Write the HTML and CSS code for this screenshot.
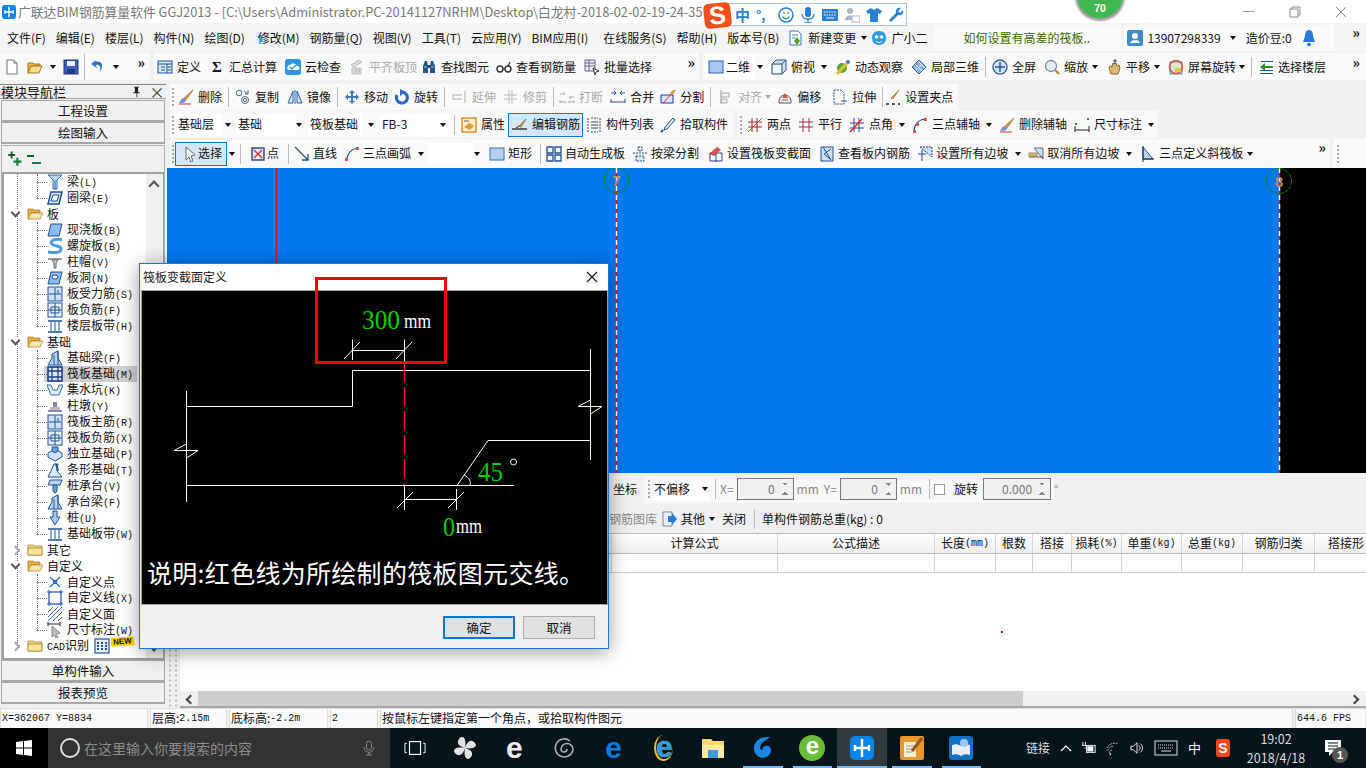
FILE: index.html
```html
<!DOCTYPE html>
<html lang="zh-CN">
<head>
<meta charset="utf-8">
<title>广联达BIM钢筋算量软件 GGJ2013</title>
<link rel="stylesheet" href="styles.css">
</head>
<body>
<svg class="defs" aria-hidden="true">
<symbol id="doc" viewBox="0 0 16 16"><path d="M3 1h7l3 3v11H3z" fill="#fff" stroke="#777"/><path d="M10 1v3h3" fill="#ddd" stroke="#777"/></symbol>
<symbol id="open" viewBox="0 0 16 16"><path d="M1 4h5l1 1h6v2H5L2 14H1z" fill="#e8b84a" stroke="#a07820"/><path d="M4 7h11l-3 7H1z" fill="#f6dc8c" stroke="#a07820"/></symbol>
<symbol id="save" viewBox="0 0 16 16"><rect x="1" y="1" width="14" height="14" fill="#3d5fb8" stroke="#223a80"/><rect x="4" y="2" width="8" height="5" fill="#eef"/><rect x="4" y="10" width="8" height="5" fill="#223a80"/></symbol>
<symbol id="undo" viewBox="0 0 16 16"><path d="M5 3c6-2 9 3 6 8l-2 3c3-5 1-9-3-8l1 3-6-4 5-4z" fill="#2a6fc9"/></symbol>
<symbol id="tbl" viewBox="0 0 16 16"><rect x="1" y="2" width="14" height="12" fill="#dbe7f7" stroke="#1f4f9a"/><path d="M1 5h14M4 8h4M4 11h4M10 5v9M11 8h3M11 11h3" stroke="#1f4f9a" fill="none"/></symbol>
<symbol id="cloud" viewBox="0 0 16 16"><rect x="0" y="0" width="16" height="16" rx="3" fill="#2f95e0"/><path d="M3 11a3 3 0 0 1 2-5 4 4 0 0 1 7 1 2 2 0 0 1 1 4z" fill="#fff"/><path d="M5 8l2 2 4-4" stroke="#2f95e0" stroke-width="1.5" fill="none"/></symbol>
<symbol id="flush" viewBox="0 0 16 16"><path d="M2 6l8-5 3 2-8 5z" fill="#ddd" stroke="#bbb"/><path d="M3 9h9v6H3z" fill="#ddd" stroke="#bbb"/><path d="M7 10v4M10 10v4" stroke="#aaa"/></symbol>
<symbol id="binoc" viewBox="0 0 16 16"><path d="M2 14V7l2-5h2l1 5v7zM9 14V7l1-5h2l2 5v7z" fill="#27508f"/><rect x="6" y="6" width="4" height="3" fill="#27508f"/><path d="M3 8h3M10 8h3" stroke="#9cc" /></symbol>
<symbol id="glass" viewBox="0 0 16 16"><circle cx="4" cy="10" r="3" fill="none" stroke="#333" stroke-width="1.4"/><circle cx="12" cy="10" r="3" fill="none" stroke="#333" stroke-width="1.4"/><path d="M7 10h2M12 7l2-4" stroke="#333" stroke-width="1.2"/></symbol>
<symbol id="batch" viewBox="0 0 16 16"><path d="M1 1h10v11H1zM1 4h10M1 7h10M5 1v11" fill="#eef" stroke="#667"/><path d="M9 9l6 3-3 1-1 3z" fill="#fff" stroke="#333"/></symbol>
<symbol id="sq" viewBox="0 0 16 16"><rect x="1" y="2" width="14" height="12" fill="#a9c6f0" stroke="#2b5fb0"/></symbol>
<symbol id="cube" viewBox="0 0 16 16"><path d="M1 5l4-4h10v10l-4 4H1z" fill="#cfe0f2" stroke="#33557f"/><path d="M1 5h10v10M11 5l4-4" fill="none" stroke="#33557f"/><path d="M2 6h8v8H2z" fill="#eef5fc"/></symbol>
<symbol id="orbit" viewBox="0 0 16 16"><circle cx="7" cy="9" r="5" fill="#5aa83c"/><path d="M2 15L14 2" stroke="#d8c030" stroke-width="3"/><circle cx="13" cy="3" r="2" fill="#4a7bd0"/></symbol>
<symbol id="local3" viewBox="0 0 16 16"><path d="M8 1l7 7-7 7-7-7z" fill="#8bb2e6" stroke="#2d5da8"/><path d="M4 5l7 7M7 2l7 7M5 11l6-6" stroke="#fff"/></symbol>
<symbol id="full" viewBox="0 0 16 16"><circle cx="8" cy="8" r="7" fill="#d4e3f6" stroke="#3b5f99" stroke-width="1.4"/><path d="M8 3v10M3 8h10" stroke="#27508f" stroke-width="1.5"/></symbol>
<symbol id="zoom" viewBox="0 0 16 16"><circle cx="7" cy="7" r="5.5" fill="#e4edf6" stroke="#7a8aa0" stroke-width="1.3"/><path d="M11 11l4 4" stroke="#b08a3a" stroke-width="2.4"/></symbol>
<symbol id="pan" viewBox="0 0 16 16"><path d="M3 9l2 6h7l2-6-1-3-2 1-1-3-2 1-1-1-1 4-2-1z" fill="#dcb878" stroke="#8a6a30"/><path d="M9 0v5M7 2h4" stroke="#446" /></symbol>
<symbol id="spin" viewBox="0 0 16 16"><rect x="2" y="3" width="12" height="12" fill="#d8e8c8" stroke="#39a"/><circle cx="8" cy="8" r="6.5" fill="none" stroke="#d9534f" stroke-width="1.5"/><path d="M7 9h6v4H7z" fill="#e8c24a"/></symbol>
<symbol id="floors" viewBox="0 0 16 16"><path d="M2 8l5-4v3h8v2H7v3z" fill="#2f8a3c"/><path d="M2 14h13v1H2zM3 2h12v1H3zM2 11h13v1H2z" fill="#27508f"/></symbol>
<symbol id="brush" viewBox="0 0 16 16"><path d="M15 1L6 9l2 2z" fill="#d99a3c" stroke="#8a5a20" stroke-width=".6"/><path d="M6 9c-3 0-3 3-5 5 3 0 7 0 7-3z" fill="#7a8fd0"/><path d="M1 15h12" stroke="#c33"/></symbol>
<symbol id="copy" viewBox="0 0 16 16"><circle cx="4" cy="4" r="2.8" fill="none" stroke="#567"/><circle cx="10" cy="11" r="3.5" fill="none" stroke="#567"/><circle cx="10" cy="11" r="1.6" fill="none" stroke="#567"/><path d="M9 2l4 3M13 1v4h-3" fill="none" stroke="#567"/></symbol>
<symbol id="mirror" viewBox="0 0 16 16"><path d="M1 14L6 2v12zM15 14L10 2v12z" fill="#d9e6f7" stroke="#2d5da8"/><path d="M8 1v14" stroke="#2d5da8"/></symbol>
<symbol id="move" viewBox="0 0 16 16"><path d="M8 1l3 3H9v3h3V5l3 3-3 3V9H9v3h2l-3 3-3-3h2V9H4v2L1 8l3-3v2h3V4H5z" fill="#4576b8"/></symbol>
<symbol id="rot" viewBox="0 0 16 16"><path d="M8 3a5.5 5.5 0 1 1-5 3" fill="none" stroke="#2a66c4" stroke-width="3"/><path d="M6 0v7l5-4z" fill="#2a66c4"/></symbol>
<symbol id="ext" viewBox="0 0 16 16"><path d="M1 6h9M1 10h9M13 2v12M1 6v4" stroke="#aaa" fill="none"/></symbol>
<symbol id="trim" viewBox="0 0 16 16"><path d="M1 6h13M1 10h13M6 1v14M9 1v14" stroke="#bbb" fill="none"/></symbol>
<symbol id="brk" viewBox="0 0 16 16"><path d="M1 13h6M9 13h6M1 5h5l-2-2M15 8h-5l2 2M1 11v3M15 11v3" stroke="#aaa" fill="none"/></symbol>
<symbol id="merge" viewBox="0 0 16 16"><path d="M1 4h5M15 4h-5M4 2l2 2-2 2M12 2l-2 2 2 2" stroke="#27508f" fill="none"/><path d="M1 13h14M1 10v4M15 10v4" stroke="#27508f" fill="none"/></symbol>
<symbol id="split" viewBox="0 0 16 16"><path d="M1 6h12v8H1z" fill="#dbe7f7" stroke="#2233aa"/><path d="M3 14L15 1" stroke="#c33"/><path d="M13 1l2 2-3 3-2-2z" fill="#d99a3c"/></symbol>
<symbol id="align" viewBox="0 0 16 16"><path d="M3 1v14M3 4h8v4H3zM3 10h6v4H3z" stroke="#aaa" fill="#eee"/></symbol>
<symbol id="offset" viewBox="0 0 16 16"><path d="M2 12a6 6 0 0 1 12 0v2H2z" fill="#eee" stroke="#556"/><path d="M8 4l3 5H5z" fill="#d9534f"/><path d="M5 11h6" stroke="#d9534f"/></symbol>
<symbol id="stretch" viewBox="0 0 16 16"><path d="M2 1h7l3 3v11H2z" fill="#fff" stroke="#27508f" stroke-dasharray="2 1"/><path d="M9 12h6" stroke="#27508f"/></symbol>
<symbol id="grips" viewBox="0 0 16 16"><path d="M14 1L8 10l-2-1z" fill="#d99a3c" stroke="#8a5a20" stroke-width=".5"/><path d="M1 15h3M7 15h3M13 15h2" stroke="#222" stroke-width="1.5"/></symbol>
<symbol id="prop" viewBox="0 0 16 16"><rect x="1" y="1" width="14" height="14" fill="#fbeed0" stroke="#e08a20" stroke-width="1.4"/><path d="M3 10l5-4 5 3-4 4z" fill="#d8a030"/><path d="M3 4h5" stroke="#666"/></symbol>
<symbol id="edit" viewBox="0 0 16 16"><path d="M14 2l-7 7 2 1z" fill="#d9a050" stroke="#7a5a20" stroke-width=".7"/><path d="M0 12h15" stroke="#222" stroke-width="1.3"/><path d="M4 11l3-2" stroke="#222"/></symbol>
<symbol id="list" viewBox="0 0 16 16"><path d="M2 1v14M14 1v14M5 1h7M5 15h7" stroke="#345" stroke-dasharray="2 1" fill="none"/><path d="M5 5h7M5 8h7M5 11h7" stroke="#345"/></symbol>
<symbol id="pick" viewBox="0 0 16 16"><path d="M13 1l2 2-8 9-3 1 1-3z" fill="#d5e4f7" stroke="#27508f"/><path d="M3 13l-2 2" stroke="#27508f" stroke-width="2"/></symbol>
<symbol id="two" viewBox="0 0 16 16"><path d="M5 1v14M10 1v14M1 5h14M1 10h14" stroke="#9a2a2a"/><path d="M1 15L15 1" stroke="#2f8a3c"/></symbol>
<symbol id="para" viewBox="0 0 16 16"><path d="M5 1v14M11 1v14M1 5h14M1 10h14" stroke="#9a2a4a"/></symbol>
<symbol id="angle" viewBox="0 0 16 16"><path d="M5 1v14M10 1v14M1 6h14M1 11h14" stroke="#27508f"/><path d="M1 15L13 2" stroke="#d22" stroke-width="1.4"/></symbol>
<symbol id="arc3" viewBox="0 0 16 16"><path d="M2 15C2 8 6 3 13 2" fill="none" stroke="#27508f" stroke-width="1.2"/><rect x="1" y="13" width="3" height="3" fill="#d9534f"/><rect x="12" y="1" width="3" height="3" fill="#d9534f"/><rect x="4" y="6" width="3" height="3" fill="#d9534f"/></symbol>
<symbol id="dim" viewBox="0 0 16 16"><path d="M1 9v6M15 9v6M1 13h14" stroke="#222"/><rect x="1" y="6" width="2" height="2" fill="#2a8a3c"/><rect x="13" y="1" width="2" height="2" fill="#2a8a3c"/></symbol>
<symbol id="cur" viewBox="0 0 16 16"><path d="M4 1l9 8-4 1 2 5-2 1-2-5-3 3z" fill="#fff" stroke="#666"/></symbol>
<symbol id="pt" viewBox="0 0 16 16"><rect x="2" y="2" width="12" height="12" fill="#e3ecf8" stroke="#27408f" stroke-width="1.4"/><path d="M4 4l8 8M12 4l-8 8" stroke="#c33" stroke-width="1.3"/></symbol>
<symbol id="ln" viewBox="0 0 16 16"><path d="M1 1l13 13M14 8v6H8" stroke="#27508f" stroke-width="1.3" fill="none"/></symbol>
<symbol id="arc" viewBox="0 0 16 16"><path d="M3 14C3 8 7 3 13 2" fill="none" stroke="#27508f" stroke-width="1.2"/><rect x="1" y="12" width="3" height="3" fill="#d9534f"/><rect x="12" y="1" width="3" height="3" fill="#d9534f"/></symbol>
<symbol id="rc" viewBox="0 0 16 16"><rect x="1" y="2" width="14" height="12" fill="#b7cff2" stroke="#3a6cc0"/></symbol>
<symbol id="auto" viewBox="0 0 16 16"><path d="M1 1h6v6H1zM9 1h6v6H9zM1 9h6v6H1zM9 9h6v6H9z" fill="#eef4fc" stroke="#27508f" stroke-width="1.3"/></symbol>
<symbol id="bsplit" viewBox="0 0 16 16"><path d="M6 1h4v4H6zM1 7h14M4 10h8v5H4z" fill="#dbe7f7" stroke="#27508f" stroke-dasharray="2 1"/></symbol>
<symbol id="sect" viewBox="0 0 16 16"><path d="M2 7h12v8H2z" fill="#fff" stroke="#27408f"/><path d="M1 8l8-7 4 3-7 6z" fill="#d9534f"/><path d="M8 7v9" stroke="#27408f"/></symbol>
<symbol id="vreb" viewBox="0 0 16 16"><rect x="2" y="1" width="12" height="14" fill="#cfdff5" stroke="#27508f"/><path d="M4 1l8 13M12 3L5 8l6 5" fill="none" stroke="#27508f"/></symbol>
<symbol id="slope" viewBox="0 0 16 16"><path d="M3 1h12v10L3 1z" fill="#cfe0f5" stroke="#27408f" stroke-dasharray="2 1"/><path d="M1 8h8M5 4v11" stroke="#27408f"/></symbol>
<symbol id="unslope" viewBox="0 0 16 16"><path d="M6 2h9v11L6 2z" fill="#cfe0f5" stroke="#667"/><rect x="1" y="7" width="8" height="3" fill="#e8c850" stroke="#987"/><path d="M1 11h14" stroke="#555"/></symbol>
<symbol id="tri" viewBox="0 0 16 16"><path d="M3 1l10 12H3z" fill="#bcd4f4" stroke="#27508f"/><path d="M3 0v16M3 13h11" stroke="#222"/></symbol>
<symbol id="new" viewBox="0 0 16 16"><path d="M2 1h8l3 3v11H2z" fill="#fff" stroke="#3a78c8"/><path d="M4 5h6M4 8h3" stroke="#3a78c8"/><path d="M9 7l3 4-3 4-3-4z" fill="#5aa02c"/></symbol>
<symbol id="gxe" viewBox="0 0 16 16"><path d="M8 1c5 0 7 3 7 7 0 5-4 7-7 7s-7-2-7-7c0-4 2-7 7-7z" fill="#2f9be6"/><circle cx="5.500" cy="7" r="1.800" fill="#fff"/><circle cx="10.500" cy="7" r="1.800" fill="#fff"/><path d="M5 11c2 2 4 2 6 0" stroke="#fff" fill="none"/></symbol>
<symbol id="user" viewBox="0 0 16 16"><rect width="16" height="16" rx="2" fill="#3d8ccc"/><circle cx="8" cy="6" r="3" fill="#fff"/><path d="M3 13c1-4 9-4 10 0z" fill="#fff"/></symbol>
<symbol id="bell" viewBox="0 0 16 16"><path d="M8 0c3 0 4 3 4 6l2 6H2l2-6c0-3 1-6 4-6z" fill="#2a78e0"/><rect x="6" y="13" width="4" height="3" rx="1.500" fill="#2a78e0"/></symbol>
<symbol id="folderO" viewBox="0 0 16 16"><path d="M1 3h5l1 1h6v3H4l-2 6H1z" fill="#e6b24a" stroke="#a07a28" stroke-width=".7"/><path d="M4 7h12l-3 6H1z" fill="#fbe7a8" stroke="#a07a28" stroke-width=".7"/></symbol>
<symbol id="folderC" viewBox="0 0 16 16"><path d="M1 3h5l1 1h8v9H1z" fill="#f4d67c" stroke="#a07a28" stroke-width=".7"/><path d="M1 6h14v7H1z" fill="#fbe49a" stroke="#a07a28" stroke-width=".7"/></symbol>
<symbol id="t-beam" viewBox="0 0 16 16"><path d="M1 1h14l-5 5v9H6V6z" fill="#bcd6f2" stroke="#2a6ab8"/><path d="M8 6v9" stroke="#2a6ab8"/></symbol>
<symbol id="t-ring" viewBox="0 0 16 16"><path d="M4 2h11l-3 12H1z" fill="#dbe8f8" stroke="#1f4f9a" stroke-width="1.5"/><path d="M6 5h6l-2 6H4z" fill="#fff" stroke="#1f4f9a"/></symbol>
<symbol id="t-slab" viewBox="0 0 16 16"><path d="M4 2h11l-3 12H1z" fill="#8db9ec" stroke="#1f4f9a"/></symbol>
<symbol id="t-helix" viewBox="0 0 16 16"><path d="M15 2C8 0 2 3 5 6s9 1 9 5-6 4-13 3" fill="none" stroke="#4a9be0" stroke-width="3"/></symbol>
<symbol id="t-cap" viewBox="0 0 16 16"><path d="M1 4h14v2H1z" fill="#999"/><path d="M5 6h6l-2 3v5H7V9z" fill="#c6d8ec" stroke="#667"/></symbol>
<symbol id="t-hole" viewBox="0 0 16 16"><path d="M4 2h11l-3 12H1z" fill="#8db9ec" stroke="#1f4f9a"/><ellipse cx="8" cy="7" rx="3" ry="2" fill="#fff" stroke="#1f4f9a"/></symbol>
<symbol id="t-sr" viewBox="0 0 16 16"><rect x="1" y="1" width="14" height="14" fill="#cfe0f6" stroke="#1f4f9a"/><path d="M2 8h12M8 2v12M11 4v3" stroke="#1f4f9a" fill="none"/></symbol>
<symbol id="t-nr" viewBox="0 0 16 16"><rect x="1" y="1" width="14" height="14" fill="#e8f0fa" stroke="#1f4f9a"/><path d="M1 8h14M8 1v14M4 5h8v6H4z" stroke="#1f4f9a" fill="none"/></symbol>
<symbol id="t-band" viewBox="0 0 16 16"><path d="M1 3h14M1 14h14" stroke="#1f4f9a" stroke-width="1.5"/><path d="M4 4v9M8 4v9M12 4v9" stroke="#5a8fd0" stroke-width="1.5"/></symbol>
<symbol id="t-fb" viewBox="0 0 16 16"><path d="M1 15l4-7V4l6-3v7l4 7z" fill="#bcd6f2" stroke="#1f4f9a"/><path d="M7 5v10M11 1v14" stroke="#1f4f9a"/></symbol>
<symbol id="t-raft" viewBox="0 0 16 16"><rect x="1" y="1" width="14" height="14" fill="#dbe7f7" stroke="#1f3f8a" stroke-width="1.6"/><path d="M1 5h14M1 11h14M5 1v14M11 1v14" stroke="#1f3f8a" stroke-width="1.300"/></symbol>
<symbol id="t-pit" viewBox="0 0 16 16"><path d="M0 3h4l2 5h4l2-5h4l-4 10H4z" fill="#e8f0fa" stroke="#2a6ab8"/></symbol>
<symbol id="t-pier" viewBox="0 0 16 16"><path d="M6 4h4v5H6z" fill="#889"/><path d="M3 9h10v3H3z" fill="#bbc"/><path d="M1 12h14v2H1z" fill="#889"/></symbol>
<symbol id="t-iso" viewBox="0 0 16 16"><path d="M1 7l7-4 7 4v4l-7 4-7-4z" fill="#cfe0f6" stroke="#1f4f9a"/><path d="M5 5V1h6v4l-3 2z" fill="#6f9fd8" stroke="#1f4f9a"/></symbol>
<symbol id="t-strip" viewBox="0 0 16 16"><path d="M1 15l3-6 3-7h4l-1 7 5 6z" fill="#e3edf9" stroke="#1f4f9a"/><path d="M9 2l2 7" stroke="#1f4f9a" stroke-width="2"/></symbol>
<symbol id="t-pc" viewBox="0 0 16 16"><path d="M3 2h12l-2 5H1z" fill="#bcd6f2" stroke="#1f4f9a"/><path d="M6 7h4v6l-2 2-2-2z" fill="#6f9fd8" stroke="#1f4f9a"/></symbol>
<symbol id="t-pile" viewBox="0 0 16 16"><path d="M6 1h4v6h3l-5 8-5-8h3z" fill="#a8c8ee" stroke="#1f4f9a"/></symbol>
<symbol id="t-x" viewBox="0 0 16 16"><path d="M3 3l10 10M13 3L3 13" stroke="#2a6ab8" stroke-width="1.200"/><rect x="6.500" y="6.500" width="3" height="3" fill="none" stroke="#2a6ab8"/></symbol>
<symbol id="t-line" viewBox="0 0 16 16"><rect x="2" y="2" width="12" height="12" fill="none" stroke="#1f4fb0" stroke-width="1.200"/><path d="M1 1h2v2H1zM13 1h2v2h-2zM1 13h2v2H1zM13 13h2v2h-2z" fill="#fff" stroke="#1f4fb0"/></symbol>
<symbol id="t-hatch" viewBox="0 0 16 16"><path d="M1 6l5-5M1 11L11 1M1 15L15 1M6 15l9-9M11 15l4-4" stroke="#2a6ab8"/></symbol>
<symbol id="t-dc" viewBox="0 0 16 16"><path d="M1 2h12M1 0v4M13 0v4" stroke="#222"/><path d="M5 4l8 7-4 1 2 4-2 0-2-3-2 2z" fill="#bbb" stroke="#888"/></symbol>
<symbol id="t-cols" viewBox="0 0 16 16"><rect x="1" y="1" width="14" height="14" fill="#e3edf9" stroke="#27508f" stroke-width="1.200"/><path d="M4 4v8M8 4v8M12 4v8" stroke="#27508f" stroke-width="2" stroke-dasharray="2 1"/></symbol>
<symbol id="pin" viewBox="0 0 16 16"><path d="M5 2h6v1H10v6h2v1H9v5H8v-5H4V9h2V3H5z" fill="#222"/></symbol>
<symbol id="win" viewBox="0 0 16 16"><path d="M0 2l7-1v6.500H0zM8 1l8-1v7.500H8zM0 8.500h7V15l-7-1zM8 8.500h8V16l-8-1z" fill="#fff"/></symbol>
<symbol id="mic" viewBox="0 0 16 16"><rect x="5.500" y="1" width="5" height="9" rx="2.500" fill="none" stroke="#888"/><path d="M3 7c0 7 10 7 10 0M8 12v3M5 15h6" fill="none" stroke="#888"/></symbol>
<symbol id="tv" viewBox="0 0 24 16"><rect x="6" y="1" width="12" height="14" fill="none" stroke="#fff" stroke-width="1.300"/><path d="M3 3H1v10h2M21 3h2v10h-2" fill="none" stroke="#fff"/></symbol>
<symbol id="wheel" viewBox="0 0 24 24"><path d="M12 12C6 10 3 7 6 3s8-2 6 9zM12 12c2-6 5-9 9-6s2 8-9 6zM12 12c6 2 9 5 6 9s-8 2-6-9zM12 12c-2 6-5 9-9 6s-2-8 9-6z" fill="#e4e4e4"/></symbol>
<symbol id="spiral" viewBox="0 0 24 24"><path d="M18 5A9 9 0 1 0 21 14 6 6 0 1 0 9 13a3 3 0 0 0 6 0" fill="none" stroke="#aaa" stroke-width="1.600"/></symbol>
<symbol id="folder" viewBox="0 0 24 24"><path d="M1 3h9l2 2h11v17H1z" fill="#f7d774"/><path d="M1 9h22v13H1z" fill="#fde8a0"/><rect x="7" y="14" width="10" height="8" fill="#3a9be0"/></symbol>
<symbol id="gapp" viewBox="0 0 24 24"><path d="M19 1C9 0 2 6 3 14c1 7 9 10 14 6 4-3 4-9 0-10-4-1-6 2-5 4l-3-1c0-4 2-7 6-9z" fill="#1a86e6"/></symbol>
<symbol id="gl" viewBox="0 0 24 24"><rect x="0" y="0" width="24" height="24" rx="5" fill="#0a84e8"/><path d="M12 3v18M5 12h14M5 9v6M19 9v6" stroke="#fff" stroke-width="2.400" fill="none"/></symbol>
<symbol id="note" viewBox="0 0 24 24"><rect width="24" height="24" rx="2" fill="#e8982c"/><path d="M4 6h12v15H4z" fill="#f7eecb"/><path d="M6 10h8M6 13h8M6 16h6" stroke="#999"/><path d="M22 2L12 15" stroke="#a0521c" stroke-width="3"/></symbol>
<symbol id="book" viewBox="0 0 24 24"><rect width="24" height="24" rx="3" fill="#1270c8"/><path d="M3 9c3-1 6-1 9 1 3-2 6-2 9-1v10c-3-1-6-1-9 1-3-2-6-2-9-1z" fill="#e6eef8"/><circle cx="15" cy="7" r="4" fill="#9ccaf4"/></symbol>
<symbol id="plug" viewBox="0 0 16 16"><rect x="5" y="5" width="10" height="8" fill="none" stroke="#fff"/><rect x="6" y="6" width="7" height="6" fill="#fff"/><path d="M1 1v4M4 1v4M0 5h5v2l-2 2" stroke="#fff" fill="none"/></symbol>
<symbol id="wifi" viewBox="0 0 16 16"><path d="M1 8a10 10 0 0 1 12-5M2 11a7 7 0 0 1 7-5M4 14a4 4 0 0 1 3-4" fill="none" stroke="#ddd" stroke-dasharray="2 1"/><circle cx="5" cy="15" r="1" fill="#ddd"/></symbol>
<symbol id="vol" viewBox="0 0 16 16"><path d="M1 6h3l4-4v12l-4-4H1z" fill="none" stroke="#fff"/><path d="M10 5c2 2 2 4 0 6M12 3c3 3 3 7 0 10" stroke="#fff" fill="none"/></symbol>
<symbol id="kbd" viewBox="0 0 24 16"><rect x="1" y="1" width="22" height="14" fill="none" stroke="#ddd"/><path d="M4 5h16M4 8h16" stroke="#ddd" stroke-dasharray="1 1"/><path d="M7 11h10" stroke="#ddd"/></symbol>
<symbol id="msg" viewBox="0 0 16 16"><path d="M0 0h16v12H8l-4 4v-4H0z" fill="#fff"/><path d="M3 3h10M3 6h10M3 9h7" stroke="#111"/></symbol>
<symbol id="sgmic" viewBox="0 0 16 16"><rect x="5" y="0" width="6" height="10" rx="3" fill="#2a7fd0"/><path d="M2 7c0 7 12 7 12 0M8 13v3M4 16h8" stroke="#2a7fd0" fill="none" stroke-width="1.300"/></symbol>
<symbol id="smile" viewBox="0 0 16 16"><circle cx="8" cy="8" r="7" fill="#fff" stroke="#2a7fd0" stroke-width="1.500"/><path d="M4.500 9.500c2 3 5 3 7 0M6 5v2M10 5v2" stroke="#2a7fd0" fill="none" stroke-width="1.300"/></symbol>
<symbol id="sgkbd" viewBox="0 0 16 16"><rect y="2" width="16" height="12" rx="1" fill="#2a7fd0"/><path d="M2 5h12M2 8h12" stroke="#fff" stroke-dasharray="1.500 1"/><path d="M4 11h8" stroke="#fff"/></symbol>
<symbol id="sgusr" viewBox="0 0 16 16"><circle cx="6" cy="4" r="3" fill="#a8b4c0"/><path d="M1 13c0-6 10-6 10 0z" fill="#a8b4c0"/><rect x="8" y="9" width="8" height="6" fill="#fff" stroke="#a8b4c0"/></symbol>
<symbol id="shirt" viewBox="0 0 16 16"><path d="M5 1L0 4l2 3 2-1v9h8V6l2 1 2-3-5-3-3 2z" fill="#2a7fd0"/></symbol>
<symbol id="wrench" viewBox="0 0 16 16"><path d="M15 3l-3 3-2-2 3-3c-3-1-6 1-5 5L1 13l2 2 7-7c4 1 6-2 5-5z" fill="#2a7fd0"/></symbol>
</svg>

<div class="app">
  <header class="titlebar">
    <svg class="app-ic"><use href="#gl"/></svg>
    <span class="title-text">广联达BIM钢筋算量软件 GGJ2013 - [C:\Users\Administrator.PC-20141127NRHM\Desktop\白龙村-2018-02-02-19-24-35</span>
    <div class="win-ctrls">
      <span class="wc-min"></span>
      <svg class="wc-max" viewBox="0 0 12 12"><path d="M1 3h8v8H1zM3 3V1h8v8H9" fill="none" stroke="#888"/></svg>
      <svg class="wc-x" viewBox="0 0 12 12"><path d="M1 1l10 10M11 1L1 11" stroke="#888"/></svg>
    </div>
  </header>

  <nav class="menubar">
    <span class="mi">文件(F)</span><span class="mi">编辑(E)</span><span class="mi">楼层(L)</span><span class="mi">构件(N)</span><span class="mi">绘图(D)</span><span class="mi">修改(M)</span><span class="mi">钢筋量(Q)</span><span class="mi">视图(V)</span><span class="mi">工具(T)</span><span class="mi">云应用(Y)</span><span class="mi">BIM应用(I)</span><span class="mi">在线服务(S)</span><span class="mi">帮助(H)</span><span class="mi">版本号(B)</span>
    <span class="tool"><svg class="ic"><use href="#new"/></svg>新建变更</span><i class="caret"></i>
    <span class="tool"><svg class="ic"><use href="#gxe"/></svg>广小二</span>
    <div class="ask">如何设置有高差的筏板..</div>
    <div class="acct">
      <svg class="ic"><use href="#user"/></svg><span>13907298339</span><i class="caret"></i><span class="bean">造价豆:0</span><svg class="ic bell"><use href="#bell"/></svg>
    </div>
    <span class="more more-menu">»</span>
  </nav>

  <div class="row1">
    <div class="grp g-file">
      <svg class="ic"><use href="#doc"/></svg>
      <svg class="ic"><use href="#open"/></svg><i class="caret"></i>
      <svg class="ic"><use href="#save"/></svg>
      <i class="sep"></i>
      <svg class="ic"><use href="#undo"/></svg><i class="caret"></i>
      <span class="more">»</span>
    </div>
    <div class="grp g-main">
      <span class="tool"><svg class="ic"><use href="#tbl"/></svg>定义</span>
      <span class="tool"><b class="sigma">Σ</b>汇总计算</span>
      <span class="tool"><svg class="ic"><use href="#cloud"/></svg>云检查</span>
      <span class="tool off"><svg class="ic"><use href="#flush"/></svg>平齐板顶</span>
      <span class="tool ml-4"><svg class="ic"><use href="#binoc"/></svg>查找图元</span>
      <span class="tool ml-1"><svg class="ic"><use href="#glass"/></svg>查看钢筋量</span>
      <span class="tool"><svg class="ic"><use href="#batch"/></svg>批量选择</span>
      <span class="more">»</span>
    </div>
    <div class="grp g-view">
      <span class="tool whitebox"><svg class="ic"><use href="#sq"/></svg>二维</span><i class="caret ml-6"></i>
      <span class="tool"><svg class="ic"><use href="#cube"/></svg>俯视</span><i class="caret ml-2"></i>
      <span class="tool"><svg class="ic"><use href="#orbit"/></svg>动态观察</span>
      <span class="tool"><svg class="ic"><use href="#local3"/></svg>局部三维</span>
      <i class="sep"></i>
      <span class="tool"><svg class="ic"><use href="#full"/></svg>全屏</span>
      <span class="tool"><svg class="ic"><use href="#zoom"/></svg>缩放</span><i class="caret ml-4"></i>
      <span class="tool"><svg class="ic"><use href="#pan"/></svg>平移</span><i class="caret ml-4"></i>
      <span class="tool"><svg class="ic"><use href="#spin"/></svg>屏幕旋转</span><i class="caret ml-5"></i>
      <i class="sep"></i>
      <span class="tool"><svg class="ic"><use href="#floors"/></svg>选择楼层</span>
      <span class="more more-end">»</span>
    </div>
  </div>

  <div class="work">
    <aside class="nav">
      <div class="nav-head"><span>模块导航栏</span><svg class="ic ic-pin"><use href="#pin"/></svg><span class="nav-x">×</span></div>
      <div class="nav-btn">工程设置</div>
      <div class="nav-btn">绘图输入</div>
      <div class="nav-box">
        <div class="expand">
          <svg class="ic"><path d="M6 1h3v4h4v3H9v4H6V8H2V5h4z" fill="#186030" transform="scale(.62)"/><path d="M6 1h3v4h4v3H9v4H6V8H2V5h4z" fill="#1a7a40" transform="translate(5 6) scale(.72)"/></svg>
          <svg class="ic"><path d="M1 4h7v2H1z" fill="#186030"/><path d="M6 11h9v2H6z" fill="#1a7a40"/></svg>
        </div>
        <div class="tree">
          <i class="outer-line"></i>
          <div class="tbar"><span class="tbar-up"></span><span class="tbar-down"></span></div>
          <div class="leaf"><svg class="ic"><use href="#t-beam"/></svg><span>梁<b class="lat">(L)</b></span></div>
          <div class="leaf last"><svg class="ic"><use href="#t-ring"/></svg><span>圈梁<b class="lat">(E)</b></span></div>
          <div class="node"><i class="chev-d"></i><svg class="ic"><use href="#folderO"/></svg><span>板</span></div>
          <div class="leaf"><svg class="ic"><use href="#t-slab"/></svg><span>现浇板<b class="lat">(B)</b></span></div>
          <div class="leaf"><svg class="ic"><use href="#t-helix"/></svg><span>螺旋板<b class="lat">(B)</b></span></div>
          <div class="leaf"><svg class="ic"><use href="#t-cap"/></svg><span>柱帽<b class="lat">(V)</b></span></div>
          <div class="leaf"><svg class="ic"><use href="#t-hole"/></svg><span>板洞<b class="lat">(N)</b></span></div>
          <div class="leaf"><svg class="ic"><use href="#t-sr"/></svg><span>板受力筋<b class="lat">(S)</b></span></div>
          <div class="leaf"><svg class="ic"><use href="#t-nr"/></svg><span>板负筋<b class="lat">(F)</b></span></div>
          <div class="leaf last"><svg class="ic"><use href="#t-band"/></svg><span>楼层板带<b class="lat">(H)</b></span></div>
          <div class="node"><i class="chev-d"></i><svg class="ic"><use href="#folderO"/></svg><span>基础</span></div>
          <div class="leaf"><svg class="ic"><use href="#t-fb"/></svg><span>基础梁<b class="lat">(F)</b></span></div>
          <div class="leaf sel"><svg class="ic"><use href="#t-raft"/></svg><span>筏板基础<b class="lat">(M)</b></span></div>
          <div class="leaf"><svg class="ic"><use href="#t-pit"/></svg><span>集水坑<b class="lat">(K)</b></span></div>
          <div class="leaf"><svg class="ic"><use href="#t-pier"/></svg><span>柱墩<b class="lat">(Y)</b></span></div>
          <div class="leaf"><svg class="ic"><use href="#t-sr"/></svg><span>筏板主筋<b class="lat">(R)</b></span></div>
          <div class="leaf"><svg class="ic"><use href="#t-nr"/></svg><span>筏板负筋<b class="lat">(X)</b></span></div>
          <div class="leaf"><svg class="ic"><use href="#t-iso"/></svg><span>独立基础<b class="lat">(P)</b></span></div>
          <div class="leaf"><svg class="ic"><use href="#t-strip"/></svg><span>条形基础<b class="lat">(T)</b></span></div>
          <div class="leaf"><svg class="ic"><use href="#t-pc"/></svg><span>桩承台<b class="lat">(V)</b></span></div>
          <div class="leaf"><svg class="ic"><use href="#t-fb"/></svg><span>承台梁<b class="lat">(F)</b></span></div>
          <div class="leaf"><svg class="ic"><use href="#t-pile"/></svg><span>桩<b class="lat">(U)</b></span></div>
          <div class="leaf last"><svg class="ic"><use href="#t-band"/></svg><span>基础板带<b class="lat">(W)</b></span></div>
          <div class="node"><i class="chev-r"></i><svg class="ic"><use href="#folderC"/></svg><span>其它</span></div>
          <div class="node"><i class="chev-d"></i><svg class="ic"><use href="#folderO"/></svg><span>自定义</span></div>
          <div class="leaf"><svg class="ic"><use href="#t-x"/></svg><span>自定义点</span></div>
          <div class="leaf"><svg class="ic"><use href="#t-line"/></svg><span>自定义线<b class="lat">(X)</b></span><svg class="ic ic-tail"><use href="#t-cols"/></svg></div>
          <div class="leaf"><svg class="ic"><use href="#t-hatch"/></svg><span>自定义面</span></div>
          <div class="leaf last"><svg class="ic"><use href="#t-dc"/></svg><span>尺寸标注<b class="lat">(W)</b></span></div>
          <div class="node"><i class="chev-r"></i><svg class="ic"><use href="#folderC"/></svg><span><b class="lat">CAD</b>识别</span><svg class="ic ic-tail2"><use href="#t-cols"/></svg><b class="newtag">NEW</b></div>
        </div>
      </div>
      <div class="nav-btn">单构件输入</div>
      <div class="nav-btn">报表预览</div>
    </aside>

    <section class="main">
      <div class="row row2">
        <div class="grp g-edit">
          <i class="grip"></i>
          <span class="tool"><svg class="ic"><use href="#brush"/></svg>删除</span><i class="sep"></i>
          <span class="tool"><svg class="ic"><use href="#copy"/></svg>复制</span>
          <span class="tool"><svg class="ic"><use href="#mirror"/></svg>镜像</span><i class="sep"></i>
          <span class="tool"><svg class="ic"><use href="#move"/></svg>移动</span>
          <span class="tool ml-2"><svg class="ic"><use href="#rot"/></svg>旋转</span><i class="sep"></i>
          <span class="tool off ml1"><svg class="ic"><use href="#ext"/></svg>延伸</span>
          <span class="tool off ml-1"><svg class="ic"><use href="#trim"/></svg>修剪</span><i class="sep"></i>
          <span class="tool off ml-1"><svg class="ic"><use href="#brk"/></svg>打断</span>
          <span class="tool ml-1"><svg class="ic"><use href="#merge"/></svg>合并</span>
          <span class="tool ml-2"><svg class="ic"><use href="#split"/></svg>分割</span><i class="sep"></i>
          <span class="tool off ml1"><svg class="ic"><use href="#align"/></svg>对齐</span><i class="caret caret-off ml-5"></i>
          <span class="tool ml-2"><svg class="ic"><use href="#offset"/></svg>偏移</span>
          <span class="tool ml3"><svg class="ic"><use href="#stretch"/></svg>拉伸</span><i class="sep"></i>
          <span class="tool ml-4"><svg class="ic"><use href="#grips"/></svg>设置夹点</span>
        </div>
      </div>
      <div class="row row3">
        <div class="grp g-sel">
          <i class="grip"></i>
          <span class="combo c-a">基础层</span><i class="caret"></i>
          <span class="combo c-b ml2">基础</span><i class="caret ml-3"></i>
          <span class="combo c-c ml3">筏板基础</span><i class="caret ml3"></i>
          <span class="combo c-d ml3">FB-3</span><i class="caret ml-13"></i>
          <i class="sep ml5"></i>
          <span class="tool ml3"><svg class="ic"><use href="#prop"/></svg>属性</span>
          <span class="tool hl"><svg class="ic"><use href="#edit"/></svg>编辑钢筋</span>
          <span class="tool"><svg class="ic"><use href="#list"/></svg>构件列表</span>
          <span class="tool ml3"><svg class="ic"><use href="#pick"/></svg>拾取构件</span>
        </div>
        <div class="grp g-axis">
          <i class="grip"></i>
          <span class="tool"><svg class="ic"><use href="#two"/></svg>两点</span>
          <span class="tool"><svg class="ic"><use href="#para"/></svg>平行</span>
          <span class="tool"><svg class="ic"><use href="#angle"/></svg>点角</span><i class="caret"></i>
          <span class="tool"><svg class="ic"><use href="#arc3"/></svg>三点辅轴</span><i class="caret"></i>
          <span class="tool"><svg class="ic"><use href="#brush"/></svg>删除辅轴</span>
          <span class="tool"><svg class="ic"><use href="#dim"/></svg>尺寸标注</span><i class="caret"></i>
        </div>
      </div>
      <div class="row row4">
        <div class="grp g-draw">
          <i class="grip"></i>
          <span class="tool hl hl-sel"><svg class="ic"><use href="#cur"/></svg>选择</span><i class="caret ml-5"></i><i class="sep"></i>
          <span class="tool tool-pt ml4"><svg class="ic"><use href="#pt"/></svg>点</span><i class="sep ml2"></i>
          <span class="tool"><svg class="ic"><use href="#ln"/></svg>直线</span>
          <span class="tool"><svg class="ic"><use href="#arc"/></svg>三点画弧</span><i class="caret"></i>
          <span class="combo c-e ml-3"></span><i class="caret ml-6"></i>
          <span class="tool ml2"><svg class="ic"><use href="#rc"/></svg>矩形</span><i class="sep ml1"></i>
          <span class="tool"><svg class="ic"><use href="#auto"/></svg>自动生成板</span>
          <span class="tool"><svg class="ic"><use href="#bsplit"/></svg>按梁分割</span>
          <span class="tool ml2"><svg class="ic"><use href="#sect"/></svg>设置筏板变截面</span>
          <span class="tool ml1"><svg class="ic"><use href="#vreb"/></svg>查看板内钢筋</span>
          <span class="tool"><svg class="ic"><use href="#slope"/></svg>设置所有边坡</span><i class="caret"></i>
          <span class="tool"><svg class="ic"><use href="#unslope"/></svg>取消所有边坡</span><i class="caret"></i>
          <span class="tool ml1"><svg class="ic"><use href="#tri"/></svg>三点定义斜筏板</span><i class="caret ml-3"></i>
          <span class="more more-end">»</span>
        </div>
        <div class="grp g-tail"><i class="grip"></i></div>
      </div>

      <div class="canvas">
        <div class="cv-black"></div>
        <svg class="cv-lines" viewBox="0 0 1199 305">
          <path class="ln-red" d="M109.500 0V305"/>
          <path class="ln-red" d="M449.500 0V305"/>
          <path class="ln-white" d="M449.500 0V305"/>
          <path class="ln-red" d="M1112.500 0V305"/>
          <path class="ln-white" d="M1112.500 0V305"/>
          <circle class="axis-c" cx="449.500" cy="12" r="12.500"/>
          <circle class="axis-c" cx="1112" cy="13" r="12.500"/>
          <text class="axis-t" x="449.500" y="18">7</text>
          <text class="axis-t" x="1112" y="19">8</text>
        </svg>
      </div>

      <div class="lower">
        <div class="splitter"></div>
        <div class="lower-body">
          <div class="coordbar">
            <span class="co-label">坐标</span>
            <div class="grp g-coord">
              <i class="grip"></i>
              <span class="combo c-f">不偏移</span><i class="caret"></i>
              <i class="sep"></i>
              <span class="dis">X=</span>
              <span class="spin">0</span>
              <span class="dis">mm</span>
              <span class="dis d-y">Y=</span>
              <span class="spin">0</span>
              <span class="dis">mm</span>
              <i class="sep"></i>
              <i class="chk"></i>
              <span class="co-rot">旋转</span>
              <span class="spin spin-w">0.000</span>
              <span class="dis">°</span>
            </div>
          </div>
          <div class="rebarbar">
            <span class="dis">钢筋图库</span>
            <svg class="ic"><path d="M2 1h9v14H2z" fill="#eef" stroke="#789"/><path d="M7 5h4V2l5 6-5 6v-3H7z" fill="#2f7ad0"/></svg>
            <span>其他</span><i class="caret"></i>
            <span>关闭</span>
            <i class="sep"></i>
            <span>单构件钢筋总重(kg) : 0</span>
          </div>
          <div class="grid-wrap">
            <div class="rgrid rhead">
              <span></span><span>计算公式</span><span>公式描述</span><span>长度<b class="lat">(mm)</b></span><span>根数</span><span>搭接</span><span>损耗<b class="lat">(%)</b></span><span>单重<b class="lat">(kg)</b></span><span>总重<b class="lat">(kg)</b></span><span>钢筋归类</span><span class="h-cut">搭接形</span>
            </div>
            <div class="rgrid rrow">
              <span></span><span></span><span></span><span></span><span></span><span></span><span></span><span></span><span></span><span></span><span></span>
            </div>
            <i class="reddot"></i>
          </div>
          <div class="hscroll">
            <span class="hs-l"></span><span class="hs-thumb"></span><span class="hs-r"></span>
          </div>
        </div>
      </div>
    </section>
  </div>

  <footer class="status">
    <span class="st st-1 mono">X=362067 Y=8834</span>
    <span class="st st-2">层高:<b class="lat">2.15m</b></span>
    <span class="st st-3">底标高:<b class="lat">-2.2m</b></span>
    <span class="st st-4 mono">2</span>
    <span class="st st-5">按鼠标左键指定第一个角点，或拾取构件图元</span>
    <span class="st st-6 mono">644.6 FPS</span>
  </footer>

  <div class="taskbar">
    <div class="start"><svg class="ic"><use href="#win"/></svg></div>
    <div class="search">
      <i class="cortana"></i>
      <span>在这里输入你要搜索的内容</span>
      <svg class="ic ic-mic"><use href="#mic"/></svg>
    </div>
    <div class="tb-apps">
      <span class="app-slot"><svg class="tvic"><use href="#tv"/></svg></span>
      <span class="app-slot"><svg class="tic"><use href="#wheel"/></svg></span>
      <span class="app-slot"><b class="e-logo e-white">e</b></span>
      <span class="app-slot"><svg class="tic"><use href="#spiral"/></svg></span>
      <span class="app-slot"><b class="e-logo e-blue">e</b></span>
      <span class="app-slot"><b class="e-logo e-ie">e</b></span>
      <span class="app-slot"><svg class="tic"><use href="#folder"/></svg></span>
      <span class="app-slot on"><svg class="tic"><use href="#gapp"/></svg></span>
      <span class="app-slot on"><b class="e-logo e-green">e</b></span>
      <span class="app-slot on cur"><svg class="tic"><use href="#gl"/></svg></span>
      <span class="app-slot on"><svg class="tic"><use href="#note"/></svg></span>
      <span class="app-slot on"><svg class="tic"><use href="#book"/></svg></span>
    </div>
    <div class="tray">
      <span class="tr-link">链接</span>
      <svg class="tr-chev" viewBox="0 0 12 8"><path d="M1 7l5-5 5 5" fill="none" stroke="#fff" stroke-width="1.200"/></svg>
      <svg class="ic tr-ic"><use href="#plug"/></svg>
      <svg class="ic tr-ic"><use href="#wifi"/></svg>
      <svg class="ic tr-ic"><use href="#vol"/></svg>
      <svg class="tr-kbd"><use href="#kbd"/></svg>
      <span class="tr-zh">中</span>
      <b class="tr-s">S</b>
      <div class="clock"><span>19:02</span><span>2018/4/18</span></div>
      <div class="notif"><svg class="ic"><use href="#msg"/></svg><b class="notif-n">1</b></div>
    </div>
  </div>
</div>

<div class="gbadge"><span>70</span></div>

<div class="sogou">
  <b class="sg-logo">S</b>
  <b class="sg-zh">中</b>
  <b class="sg-punc">°,</b>
  <svg class="ic"><use href="#smile"/></svg>
  <svg class="ic"><use href="#sgmic"/></svg>
  <svg class="ic"><use href="#sgkbd"/></svg>
  <svg class="ic"><use href="#sgusr"/></svg>
  <svg class="ic"><use href="#shirt"/></svg>
  <svg class="ic"><use href="#wrench"/></svg>
</div>

<div class="dialog">
  <div class="dlg-title">
    <span>筏板变截面定义</span>
    <svg class="dlg-x" viewBox="0 0 12 12"><path d="M1 1l10 10M11 1L1 11" stroke="#111" stroke-width="1.100"/></svg>
  </div>
  <div class="dlg-pic">
    <svg class="dlg-svg" viewBox="0 0 465 313">
      <path class="w" d="M210.500 48.500V69M262.500 48.500V72M210.500 59.500H262.500M202 68L218 51M254 68L270 51"/>
      <path class="w" d="M44.500 100V211M44.500 115.500H210.500V79.500H448.500M448.500 58V169M346 149.500H448.500M315 194.500L346 149.500M44.500 194.500H372"/>
      <path class="w" d="M32 159.500H56M32 159.500L44.500 153M56 159.500L44.500 167M436 115.500H460M436 115.500L448.500 109M460 115.500L448.500 123"/>
      <path class="w" d="M262.500 194V219M314.500 198V219M262.500 208.500H314.500M255 217L271 201M306 217L322 201"/>
      <path class="w" d="M322 184C328 187 329 191 328 194"/>
      <path class="red-dash" d="M262.500 72V194"/>
      <circle class="w" cx="371.500" cy="171" r="3"/>
      <text class="tg t-25" x="220" y="38" textLength="38" lengthAdjust="spacingAndGlyphs">300</text>
      <text class="tw t-18" x="262" y="37" textLength="27" lengthAdjust="spacingAndGlyphs">mm</text>
      <text class="tg t-25" x="336" y="190" textLength="25" lengthAdjust="spacingAndGlyphs">45</text>
      <text class="tg t-25" x="301" y="245" textLength="12" lengthAdjust="spacingAndGlyphs">0</text>
      <text class="tw t-18" x="314" y="242" textLength="26" lengthAdjust="spacingAndGlyphs">mm</text>
      <text class="tn" x="5" y="292" textLength="437">说明:红色线为所绘制的筏板图元交线。</text>
    </svg>
  </div>
  <div class="dlg-foot">
    <span class="dbtn dbtn-ok">确定</span>
    <span class="dbtn">取消</span>
  </div>
  <div class="redbox"></div>
</div>
</body>
</html>
```
FILE: styles.css
```css
*{box-sizing:border-box}
html,body{margin:0;padding:0}
body{width:1366px;height:768px;overflow:hidden;position:relative;background:#f0f0f0;color:#111;font:12px/1.2 "Noto Sans CJK SC","Liberation Sans",sans-serif}
.defs{position:absolute;width:0;height:0}
b{font-weight:400}
i{font-style:normal;display:block;flex:none}
svg{display:block;flex:none}
.ic{width:16px;height:16px}
.lat{font-family:"Liberation Mono",monospace;font-size:10px}
.mono{font-family:"Liberation Mono",monospace;font-size:10px}

.ml-13{margin-left:-13px}
.ml-6{margin-left:-6px}
.ml-5{margin-left:-5px}
.ml-4{margin-left:-4px}
.ml-3{margin-left:-3px}
.ml-2{margin-left:-2px}
.ml-1{margin-left:-1px}
.ml1{margin-left:1px}
.ml2{margin-left:2px}
.ml3{margin-left:3px}
.ml4{margin-left:4px}
.ml5{margin-left:5px}

.app{display:flex;flex-direction:column;width:1366px;height:768px}

.titlebar{height:23px;flex:none;background:#fff;display:flex;align-items:center;padding-left:2px}
.app-ic{width:14px;height:14px}
.title-text{margin-left:2px;color:#777;font-size:12.8px;white-space:nowrap}
.win-ctrls{margin-left:auto;display:flex;align-items:center;padding-right:19px;gap:34px}
.wc-min{width:12px;height:1px;background:#999;display:block}
.wc-max,.wc-x{width:12px;height:12px}

.menubar{height:29px;flex:none;background:#f4f4f4;display:flex;align-items:center;padding:1px 0 0 7px;position:relative;white-space:nowrap}
.mi{margin-right:10px}
.mi:nth-child(5){margin-right:13px}
.mi:nth-child(11){margin-right:15px}
.mi:nth-child(14){margin-right:5px}
.tool{display:flex;align-items:center;gap:4px;white-space:nowrap;flex:none}
.menubar .tool{margin-left:4px}
.menubar .tool+.caret{margin-left:5px}
.ask{margin-left:7px;width:187px;height:26px;background:#fafafa;color:#3a6a00;display:flex;align-items:center;padding-left:29px}
.acct{margin-left:3px;width:210px;height:26px;background:#fafafa;display:flex;align-items:center;padding-left:3px;gap:4px}
.acct .caret{margin:0 5px}
.acct .bean{margin-left:1px}
.bell{margin-left:5px}
.more{font-size:14px;line-height:14px;font-weight:700;align-self:flex-start;margin-top:1px;flex:none}
.more-menu{position:absolute;right:6px;top:2px;margin:0}
.more-end{margin-left:auto}

.caret{width:0;height:0;border:3px solid transparent;border-top:4px solid #111;border-bottom:0}
.caret-off{border-top-color:#aaa}
.sep{width:1px;height:20px;background:#bbb;margin:0 -2px}
.sep.ml1{margin-left:1px}
.sep.ml2{margin-left:2px}
.sep.ml5{margin-left:5px;margin-right:0}
.grip{width:2px;height:18px;background:repeating-linear-gradient(#aaa 0 2px,transparent 2px 4px);margin-right:-4px}

.grp{display:flex;align-items:center;gap:8px;background:#f9f9f9;height:100%}
.off{color:#aaa}

.row1{height:32px;flex:none;display:flex;background:#f0f0f0;padding:1px 0 4px}
.row1 .grp{padding-top:1px}
.g-file{width:150px;flex:none;padding:0 5px 0 4px;gap:7px}
.g-file .sep{height:26px}
.g-file .more{margin-left:auto}
.g-main{margin-left:4px;width:545px;flex:none;padding:0 4px 0 3px}
.g-main .more{margin-left:auto}
.sigma{font:700 15px "Liberation Serif",serif;width:16px;text-align:center}
.g-view{margin-left:4px;flex:1;min-width:0;padding:0 6px 0 2px;gap:8px}
.whitebox{background:#fff;width:50px;height:100%;padding-left:3px;gap:2px}

.work{flex:1;min-height:0;display:flex}
.nav{width:167px;flex:none;display:flex;flex-direction:column;padding-right:1px}
.nav-head{height:15px;margin:0 0 1px;border-top:1px solid #888;border-bottom:1px solid #aaa;display:flex;align-items:center;padding-left:1px;font-size:13px}
.ic-pin{margin-left:auto;width:13px;height:13px}
.nav-x{width:16px;margin:0 1px 0 6px;text-align:center;font-size:15px;color:#333}
.nav-btn{height:22px;flex:none;border:1px solid #a8a8a8;background:#f0f0f0;margin:0 1px;display:flex;align-items:center;justify-content:center;font-size:12.5px;border-bottom-width:2px}
.nav-box{height:515px;flex:none;margin:1px 1px 0;border:1px solid #b0b0b0;border-bottom:0;display:flex;flex-direction:column}
.expand{height:26px;flex:none;display:flex;gap:3px;align-items:center;padding-left:5px;background:#f0f0f0}
.tree{position:relative;flex:1;min-height:0;overflow:hidden;background:#fff;border:2px solid #a0a0a0;border-right-width:1px;margin:0}
.outer-line{position:absolute;left:13px;top:0;height:473px;border-left:1px dotted #777}
.tbar{position:absolute;right:0;top:0;bottom:0;width:17px;background:#f0f0f0}
.tbar-up,.tbar-down{position:absolute;left:4px;width:8px;height:8px;border:2px solid #555;border-right:0;border-bottom:0;transform:rotate(45deg);top:8px}
.tbar-down{top:auto;bottom:8px;transform:rotate(225deg)}
.leaf,.node{height:16px;display:flex;align-items:center;position:relative;white-space:nowrap;font-size:12px}
.leaf{padding-left:43px;gap:4px}
.leaf::before{content:"";position:absolute;left:33px;top:0;bottom:0;border-left:1px dotted #777}
.leaf::after{content:"";position:absolute;left:33px;top:8px;width:10px;border-top:1px dotted #777}
.leaf.last::before{bottom:8px}
.leaf.sel{background:linear-gradient(90deg,transparent 40px,#d0d0d0 40px,#d0d0d0 133px,transparent 133px)}
.node{padding-left:8px}
.node .ic{margin:0 4px 0 8px;background:#fff}
.chev-d,.chev-r{width:7px;height:7px;border:2px solid #555;border-left:0;border-top:0;background:#fff}
.chev-d{transform:rotate(45deg);margin-top:-3px}
.chev-r{border-color:#aaa;transform:rotate(-45deg)}
.node .ic.ic-tail2{margin:0 0 0 5px}
.ic-tail{margin-left:2px}
.newtag{background:#ffd800;font:700 8px/9px "Liberation Sans",sans-serif;padding:0 2px;margin:-10px 0 0 1px;transform:rotate(-4deg)}

.main{flex:1;min-width:0;display:flex;flex-direction:column}
.row{flex:none;display:flex;background:#f0f0f0;padding-bottom:1px}
.row2{height:27px;padding-left:3px}
.g-edit{width:788px;padding-left:2px;gap:8px}
.row3{height:28px;padding-left:3px}
.g-sel{width:564px;flex:none;padding-left:2px;gap:3px}
.g-sel .grip{margin-right:-1px}
.combo{background:#fff;height:22px;display:flex;align-items:center;padding-left:2px;flex:none;white-space:nowrap}
.c-a{width:46px}.c-b{width:60px}.c-c{width:54px}.c-d{width:70px}
.hl{background:#d5e6f5;border:1px solid #0a78d7;height:24px;padding:0 2px 0 3px}
.g-axis{margin-left:3px;width:421px;flex:none;padding-left:3px;gap:6px}
.g-axis .grip{margin-right:-2px}
.g-axis .tool{margin-left:1px}
.row4{height:29px;padding-left:3px;padding-bottom:0}
.g-draw{width:1160px;flex:none;padding:0 4px 0 2px;gap:7px}
.g-draw .grip{margin-right:-6px}
.g-draw .tool{gap:3px}
.g-draw .hl-sel{width:52px;padding-left:6px;gap:0}
.g-draw .tool-pt{gap:1px}
.c-e{width:45px}
.g-tail{width:33px;flex:none;margin-left:3px;padding-left:4px;background:#fafafa}

.canvas{height:305px;flex:none;background:#0078f0;position:relative;overflow:hidden}
.cv-black{position:absolute;left:1113px;right:0;top:0;bottom:0;background:#000}
.cv-lines{position:absolute;inset:0;width:100%;height:100%}
.ln-red,.ln-white{fill:none;stroke-width:1.400}
.ln-red{stroke:#e01020}
.ln-white{stroke:#fff;stroke-dasharray:5 4}
.axis-c{fill:none;stroke:#0a8a00;stroke-dasharray:4 1}
.axis-t{font:700 15px "Liberation Mono",monospace;fill:#b89070;text-anchor:middle}

.lower{flex:1;min-height:0;display:flex}
.splitter{width:13px;flex:none;background:#f0f0f0 radial-gradient(#b8b8b8 1px,transparent 1.500px) 0 0/6px 5px}
.lower-body{flex:1;min-width:0;display:flex;flex-direction:column}
.coordbar{height:32px;flex:none;display:flex;align-items:center;padding-left:433px;white-space:nowrap}
.co-label{margin-right:7px}
.g-coord{height:27px;width:410px;flex:none;gap:3px;padding-left:4px;background:#f7f7f7}
.g-coord .grip{margin-right:-1px}
.c-f{width:58px;padding-left:2px}
.g-coord .caret{margin-left:-11px}
.g-coord .sep{margin:0 1px 0 4px}
.dis{color:#888;flex:none}
.d-y{margin-left:2px}
.spin{width:57px;height:22px;flex:none;border:1px solid #7a7a7a;background:#f0f0f0;display:flex;align-items:center;justify-content:flex-end;padding-right:18px;color:#777;position:relative}
.spin::after{content:"";position:absolute;right:5px;top:4px;width:6px;height:12px;background:
 linear-gradient(45deg,transparent 50%,#888 50%) 0 0/3px 3px no-repeat,
 linear-gradient(-45deg,transparent 50%,#888 50%) 3px 0/3px 3px no-repeat,
 linear-gradient(135deg,transparent 50%,#888 50%) 0 9px/3px 3px no-repeat,
 linear-gradient(-135deg,transparent 50%,#888 50%) 3px 9px/3px 3px no-repeat}
.spin-w{width:68px}
.chk{width:11px;height:11px;border:1px solid #999;background:#fff}
.co-rot{margin:0 2px 0 6px;flex:none}
.rebarbar{height:28px;flex:none;display:flex;align-items:center;gap:4px;padding-left:429px;white-space:nowrap}
.rebarbar .sep{margin:0 3px 0 4px}
.rebarbar .caret{margin-right:3px}
.grid-wrap{flex:1;min-height:0;background:#fff;overflow:hidden;position:relative;border-top:1px solid #bbb;border-bottom:0}
.rgrid{display:grid;grid-template-columns:432px 166px 157px 61px 37px 39px 50px 60px 61px 72px 76px;width:1211px}
.rgrid span{border-right:1px solid #d4d4d4;display:flex;align-items:center;justify-content:center;white-space:nowrap;overflow:hidden}
.rhead{height:20px;background:linear-gradient(#fff,#eee);border-bottom:1px solid #bbb}
.rrow{height:19px;border-bottom:1px solid #ccc}
.h-cut{justify-content:flex-start !important;padding-left:13px}
.reddot{position:absolute;left:821px;top:97px;width:2px;height:2px;background:#e01020}
.hscroll{height:17px;flex:none;display:flex;align-items:stretch;background:#f0f0f0;border-bottom:2px solid #a8a8a8}
.hs-l,.hs-r{width:18px;flex:none;position:relative}
.hs-l::after,.hs-r::after{content:"";position:absolute;top:5px;width:5px;height:5px;border:2px solid #444;border-right:0;border-bottom:0}
.hs-l::after{left:7px;transform:rotate(-45deg)}
.hs-r{margin-left:auto}
.hs-r::after{left:3px;transform:rotate(135deg)}
.hs-thumb{width:825px;background:#cdcdcd;margin-bottom:0}

.status{height:20px;flex:none;display:flex;gap:2px;padding-top:0;background:#f0f0f0}
.st{background:#fafafa;border:1px solid #ddd;border-bottom:0;display:flex;align-items:center;padding-left:1px;white-space:nowrap}
.st-1{width:148px}.st-2{width:77px}.st-3{width:99px}.st-4{width:48px;}.st-5{width:913px;padding-left:1px}.st-6{width:71px}

.taskbar{height:40px;flex:none;background:#06141c;display:flex;position:relative}
.start{width:48px;flex:none;background:#000;display:flex;align-items:center;justify-content:center}
.search{width:342px;flex:none;background:#333;display:flex;align-items:center;color:#8c8c8c;font-size:14px;position:relative;padding-left:12px}
.cortana{width:20px;height:20px;border:2.500px solid #ddd;border-radius:50%;margin-right:4px}
.ic-mic{margin-left:auto;margin-right:13px}
.tb-apps{display:flex;flex:none}
.app-slot{width:49.700px;height:40px;display:flex;align-items:center;justify-content:center;position:relative;flex:none}
.app-slot.on::after{content:"";position:absolute;left:5px;right:5px;bottom:0;height:2px;background:#76b9ed}
.app-slot.cur{background:#333a3e}
.app-slot.cur::after{left:0;right:0}
.tic{width:24px;height:24px}
.tvic{width:22px;height:16px}
.e-logo{font:700 30px/30px "Liberation Sans",sans-serif}
.e-white{color:#eee}
.e-blue{color:#0c78d8}
.e-ie{color:#2a9be8;text-shadow:0 0 1px #e8c030;border:2px solid #e8c030;border-width:0 0 2px 2px;border-radius:50%;line-height:24px}
.e-green{color:#fff;background:#6cbc3c;border-radius:50%;width:26px;height:26px;line-height:22px;text-align:center;font-size:24px}
.tray{position:absolute;left:1026px;right:0;top:0;bottom:0;display:flex;align-items:center;color:#ddd;gap:10px}
.tr-link{width:24px;white-space:nowrap;font-size:12px}
.tr-chev{width:12px;height:8px}
.tr-ic{width:14px;height:14px}
.tr-kbd{width:24px;height:16px}
.tr-zh{color:#fff;font-size:13px}
.tr-s{width:14px;height:18px;background:#f04a1c;color:#fff;border-radius:3px;font:700 14px/18px "Liberation Sans",sans-serif;text-align:center;margin-left:5px}
.clock{width:60px;margin-left:6px;display:flex;flex-direction:column;align-items:center;gap:3px;font-size:12.5px;line-height:16px;white-space:nowrap}
.notif{position:relative;margin-left:9px}
.notif-n{position:absolute;left:7px;top:7px;width:16px;height:16px;border-radius:50%;background:#555;color:#fff;font:700 11px/16px "Liberation Sans",sans-serif;text-align:center}

.gbadge{position:absolute;z-index:5;left:1077px;top:-28px;width:46px;height:46px;border-radius:50%;background:#42b850;box-shadow:0 1px 2px 2px #9a9a9a;color:#fff;font:700 10.500px "Liberation Sans",sans-serif;display:flex;align-items:flex-end;justify-content:center;padding-bottom:4px}

.sogou{position:absolute;z-index:5;left:724px;top:3px;width:183px;height:23px;background:#fff;border:1px solid #a8c4dc;display:flex;align-items:center;gap:6px;padding-left:10px}
.sg-logo{position:absolute;left:-21px;top:-1px;width:27px;height:25px;background:#f0501e;color:#fff;border-radius:5px;font:700 25px/25px "Liberation Sans",sans-serif;text-align:center;transform:rotate(-6deg)}
.sg-zh{color:#2a7fd0;font-weight:700;font-size:15px}
.sg-punc{color:#2a7fd0;font-weight:700;font-size:13px;width:16px}

.dialog{position:absolute;z-index:10;left:139px;top:263px;width:470px;height:386px;background:#f0f0f0;border:1px solid #1a78d8;box-shadow:0 3px 18px rgba(0,0,0,.4);display:flex;flex-direction:column}
.dlg-title{height:26px;flex:none;background:#fff;display:flex;align-items:center;justify-content:space-between;padding:0 10px 0 3px;color:#222}
.dlg-x{width:12px;height:12px}
.dlg-pic{height:315px;flex:none;margin:0 0 0 1px;border:1px solid #a0a0a0;background:#000}
.dlg-svg{width:465px;height:313px}
.w{fill:none;stroke:#fff;stroke-width:1}
.red-dash{fill:none;stroke:#ff1030;stroke-width:1.500;stroke-dasharray:19 5}
.tg{fill:#00d000;font-family:"Liberation Serif",serif}
.tw{fill:#fff;font-family:"Liberation Serif",serif}
.t-25{font-size:28px}
.t-18{font-size:22px}
.tn{fill:#fff;font-size:25px;font-family:"Noto Sans CJK SC",sans-serif}
.dlg-foot{flex:1;display:flex;justify-content:flex-end;gap:8px;padding:11px 13px 0 0}
.dbtn{width:72px;height:23px;background:#e1e1e1;border:1px solid #adadad;display:flex;align-items:center;justify-content:center;font-size:12.5px}
.dbtn-ok{border:2px solid #0078d7}
.redbox{position:absolute;left:175px;top:13px;width:132px;height:87px;border:3px solid #f00}
```
